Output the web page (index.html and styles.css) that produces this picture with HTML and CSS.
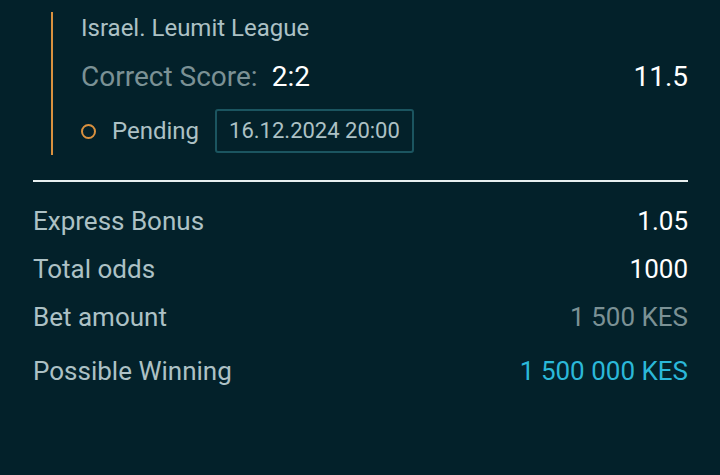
FILE: index.html
```html
<!DOCTYPE html>
<html>
<head>
    <title>Bet Details</title>
    <link rel="stylesheet" href="styles.css">
</head>
<body>
    <div class="coupon">
        <div class="event">
            <div class="league">Israel. Leumit League</div>
            <div class="pick">
                <span class="pick-label">Correct Score:</span>
                <span class="pick-value">2:2</span>
                <span class="pick-odds">11.5</span>
            </div>
            <div class="status">
                <span class="status-dot"></span>
                <span class="status-text">Pending</span>
                <span class="event-date">16.12.2024 20:00</span>
            </div>
        </div>
        <div class="divider"></div>
        <div class="summary">
            <div class="summary-row">
                <span class="summary-label">Express Bonus</span>
                <span class="summary-value">1.05</span>
            </div>
            <div class="summary-row">
                <span class="summary-label">Total odds</span>
                <span class="summary-value">1000</span>
            </div>
            <div class="summary-row">
                <span class="summary-label">Bet amount</span>
                <span class="summary-value muted">1 500 KES</span>
            </div>
            <div class="summary-row winning">
                <span class="summary-label">Possible Winning</span>
                <span class="summary-value highlight">1 500 000 KES</span>
            </div>
        </div>
    </div>
</body>
</html>
```

FILE: styles.css
```css
:root {
    --bg-color: #03212a;
    --label-color: #adc1c5;
    --muted-color: #7b9195;
    --accent-orange: #d9913f;
    --accent-cyan: #2bb8d9;
}
* {
    margin: 0;
    padding: 0;
    box-sizing: border-box;
}
body {
    font-family: Roboto, 'Noto Sans', sans-serif;
    background: var(--bg-color);
    color: #fff;
    width: 720px;
    height: 475px;
    overflow: hidden;
}
.coupon {
    padding: 12px 32px 0 33px;
}
.event {
    margin-left: 18px;
    border-left: 2px solid var(--accent-orange);
    padding-left: 28px;
    padding-bottom: 2px;
}
.league {
    font-size: 24px;
    line-height: 32px;
    color: var(--label-color);
}
.pick {
    display: flex;
    align-items: center;
    height: 65px;
    font-size: 28px;
}
.pick-label {
    color: var(--muted-color);
}
.pick-value {
    margin-left: 14px;
    color: #fff;
}
.pick-odds {
    margin-left: auto;
    color: #fff;
}
.status {
    display: flex;
    align-items: center;
    height: 44px;
}
.status-dot {
    width: 15px;
    height: 15px;
    border: 2px solid var(--accent-orange);
    border-radius: 50%;
}
.status-text {
    margin-left: 16px;
    font-size: 24px;
    color: var(--label-color);
}
.event-date {
    margin-left: 16px;
    padding: 0 12px;
    height: 44px;
    line-height: 40px;
    border: 2px solid #1b5560;
    border-radius: 3px;
    font-size: 22px;
    color: var(--label-color);
}
.divider {
    height: 2px;
    background: #e8f0f0;
    margin-top: 25px;
}
.summary {
    padding-top: 15px;
}
.summary-row {
    display: flex;
    justify-content: space-between;
    align-items: center;
    height: 48px;
    font-size: 26px;
}
.summary-row.winning {
    margin-top: 6px;
}
.summary-label {
    color: var(--label-color);
}
.summary-value {
    color: #fff;
}
.summary-value.muted {
    color: var(--muted-color);
}
.summary-value.highlight {
    color: var(--accent-cyan);
}
```
